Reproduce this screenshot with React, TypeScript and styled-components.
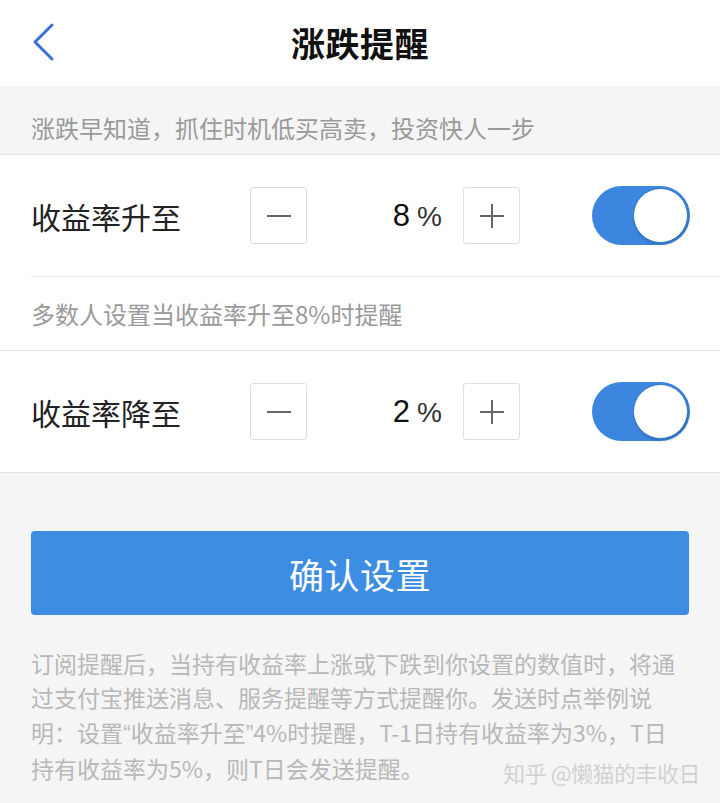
import React, { useState } from "react";
import styled, { createGlobalStyle } from "styled-components";

const GlobalStyle = createGlobalStyle`
  html, body {
    margin: 0;
    padding: 0;
    background: #f5f5f5;
  }
  body {
    font-family: "Noto Sans CJK SC", "Noto Sans", "Liberation Sans", sans-serif;
  }
`;

const Page = styled.div`
  position: relative;
  width: 720px;
  height: 803px;
  overflow: hidden;
  background: #f5f5f5;
`;

// Top navigation bar
const NavBar = styled.header`
  display: grid;
  grid-template-columns: 1fr auto 1fr;
  align-items: center;
  height: 86px;
  padding: 0 31px;
  background: #fff;
`;

const BackButton = styled.button`
  display: flex;
  align-items: center;
  justify-self: start;
  padding: 0;
  margin: 0 0 2px 1px;
  border: none;
  background: none;
  cursor: pointer;
`;

const Title = styled.h1`
  margin: 0 0 2px;
  font-size: 34px;
  font-weight: 700;
  color: #111;
  letter-spacing: 0.5px;
`;

const Intro = styled.p`
  margin: 0;
  height: 68px;
  line-height: 84px;
  padding: 0 31px;
  font-size: 24px;
  color: #9a9a9a;
  border-bottom: 1px solid #e3e3e3;
  box-sizing: content-box;
`;

const Card = styled.section`
  background: #fff;
  border-bottom: 1px solid #e3e3e3;
`;

const SettingRow = styled.div<{ $divider?: boolean }>`
  display: flex;
  align-items: center;
  height: 121px;
  padding: 0 30px 0 31px;
  border-bottom: ${({ $divider }) => ($divider ? "1px solid #e6e6e6" : "none")};
  margin-left: ${({ $divider }) => ($divider ? "31px" : "0")};
  padding-left: ${({ $divider }) => ($divider ? "0" : "31px")};
`;

const Label = styled.span`
  width: 219px;
  flex-shrink: 0;
  font-size: 30px;
  color: #222;
`;

const Stepper = styled.div`
  display: flex;
  align-items: center;
`;

const StepButton = styled.button`
  display: flex;
  align-items: center;
  justify-content: center;
  width: 57px;
  height: 57px;
  padding: 0;
  border: 1px solid #dedede;
  border-radius: 3px;
  background: #fff;
  cursor: pointer;
`;

const Value = styled.div`
  display: flex;
  align-items: baseline;
  justify-content: flex-end;
  width: 156px;
  padding-right: 21px;
  box-sizing: border-box;
`;

const Number = styled.span`
  font-family: "Liberation Sans", "Noto Sans", sans-serif;
  font-size: 31px;
  color: #111;
`;

const Percent = styled.span`
  margin-left: 7px;
  font-family: "Liberation Sans", "Noto Sans", sans-serif;
  font-size: 28px;
  color: #333;
`;

const Switch = styled.button<{ $on: boolean }>`
  position: relative;
  width: 98px;
  height: 59px;
  margin-left: auto;
  padding: 0;
  border: none;
  border-radius: 30px;
  background: ${({ $on }) => ($on ? "#3d86e0" : "#e2e2e2")};
  cursor: pointer;
`;

const Knob = styled.span<{ $on: boolean }>`
  position: absolute;
  top: 2px;
  left: ${({ $on }) => ($on ? "41px" : "2px")};
  width: 55px;
  height: 55px;
  border-radius: 50%;
  background: #fff;
  box-sizing: border-box;
  border: 1px solid #3478c9;
  box-shadow: 1px 2px 3px rgba(0, 0, 0, 0.18);
`;

const Hint = styled.p`
  margin: 0;
  height: 73px;
  line-height: 74px;
  padding: 0 31px;
  font-size: 24px;
  color: #9a9a9a;
  border-bottom: 1px solid #e6e6e6;
`;

const Actions = styled.div`
  padding: 58px 31px 0;
`;

const ConfirmButton = styled.button`
  display: block;
  width: 100%;
  height: 84px;
  border: none;
  border-radius: 4px;
  background: #3d8de3;
  color: #fff;
  font-family: inherit;
  font-size: 35px;
  letter-spacing: 0.5px;
  cursor: pointer;
`;

const Notice = styled.p`
  margin: 31px 0 0;
  padding: 0 31px;
  font-size: 23px;
  line-height: 34.4px;
  color: #b8b8b8;
`;

// narrow latin quotes, as in the original copy
const Quote = styled.span`
  font-family: "Liberation Sans", sans-serif;
`;

const Watermark = styled.span`
  position: absolute;
  right: 20px;
  bottom: 15px;
  font-size: 22px;
  color: #d0d0d0;
  text-shadow: 0 0 1px #fff;
  letter-spacing: -0.5px;
`;

const ChevronLeft = () => (
  <svg width="24" height="38" viewBox="0 0 24 38" fill="none">
    <path
      d="M20 2 L3 19 L20 36"
      stroke="#3b6fd8"
      strokeWidth="3"
      strokeLinecap="round"
      strokeLinejoin="round"
    />
  </svg>
);

const MinusIcon = () => (
  <svg width="24" height="24" viewBox="0 0 24 24">
    <path d="M0 12 H24" stroke="#666" strokeWidth="2" />
  </svg>
);

const PlusIcon = () => (
  <svg width="24" height="24" viewBox="0 0 24 24">
    <path d="M0 12 H24 M12 0 V24" stroke="#666" strokeWidth="2" />
  </svg>
);

type AlertProps = {
  label: string;
  value: number;
  on: boolean;
  divider?: boolean;
  onChange: (v: number) => void;
  onToggle: () => void;
};

const AlertSetting = ({ label, value, on, divider, onChange, onToggle }: AlertProps) => (
  <SettingRow $divider={divider}>
    <Label>{label}</Label>
    <Stepper>
      <StepButton aria-label="减少" onClick={() => onChange(Math.max(0, value - 1))}>
        <MinusIcon />
      </StepButton>
      <Value>
        <Number>{value}</Number>
        <Percent>%</Percent>
      </Value>
      <StepButton aria-label="增加" onClick={() => onChange(value + 1)}>
        <PlusIcon />
      </StepButton>
    </Stepper>
    <Switch $on={on} onClick={onToggle} aria-label="开关">
      <Knob $on={on} />
    </Switch>
  </SettingRow>
);

export default function App() {
  const [rise, setRise] = useState(8);
  const [fall, setFall] = useState(2);
  const [riseOn, setRiseOn] = useState(true);
  const [fallOn, setFallOn] = useState(true);

  return (
    <Page>
      <GlobalStyle />
      <NavBar>
        <BackButton aria-label="返回">
          <ChevronLeft />
        </BackButton>
        <Title>涨跌提醒</Title>
        <span />
      </NavBar>

      <Intro>涨跌早知道，抓住时机低买高卖，投资快人一步</Intro>

      <Card>
        <AlertSetting
          label="收益率升至"
          value={rise}
          on={riseOn}
          divider
          onChange={setRise}
          onToggle={() => setRiseOn(!riseOn)}
        />
        <Hint>多数人设置当收益率升至8%时提醒</Hint>
        <AlertSetting
          label="收益率降至"
          value={fall}
          on={fallOn}
          onChange={setFall}
          onToggle={() => setFallOn(!fallOn)}
        />
      </Card>

      <Actions>
        <ConfirmButton>确认设置</ConfirmButton>
      </Actions>

      <Notice>
        订阅提醒后，当持有收益率上涨或下跌到你设置的数值时，将通过支付宝推送消息、服务提醒等方式提醒你。发送时点举例说明：设置
        <Quote>“</Quote>收益率升至<Quote>”</Quote>4%时提醒，T-1日持有收益率为3%，T日
        <br />
        持有收益率为5%，则T日会发送提醒。
      </Notice>

      <Watermark>知乎 @懒猫的丰收日</Watermark>
    </Page>
  );
}
